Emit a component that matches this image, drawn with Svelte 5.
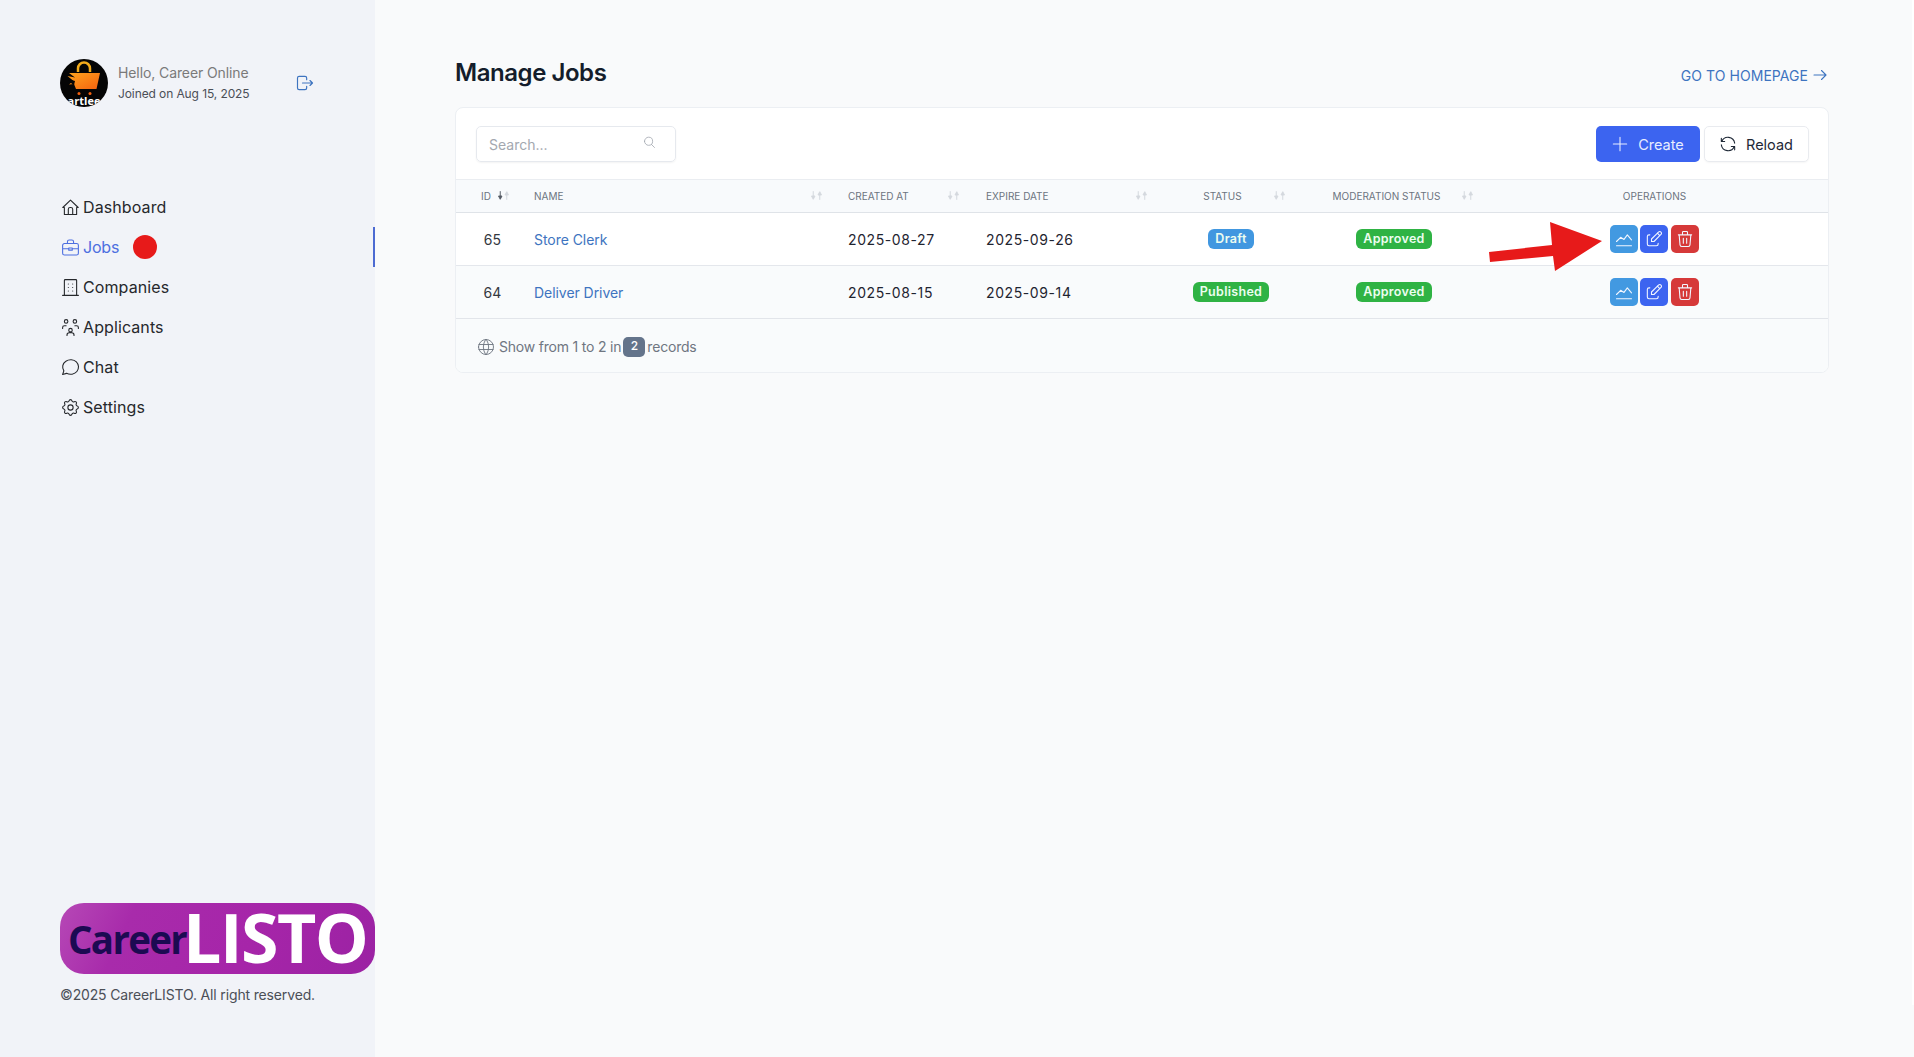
<script>
  const I = {
    home: 'M5 12H3.2L12 3.5l8.8 8.5H19v8H5zM9.5 20v-6a2 2 0 0 1 2-2h1a2 2 0 0 1 2 2v6',
    brief: 'M5 7.5h14a2 2 0 0 1 2 2v9a2 2 0 0 1-2 2H5a2 2 0 0 1-2-2v-9a2 2 0 0 1 2-2zM8.5 7.5V5.5a2 2 0 0 1 2-2h3a2 2 0 0 1 2 2v2M3 13.5h7M14 13.5h7M10 12.5h4v2.5h-4z',
    building: 'M3 21h18M5 21V4a1 1 0 0 1 1-1h12a1 1 0 0 1 1 1v17M9.5 8h.01M14.5 8h.01M9.5 12h.01M14.5 12h.01M9.5 16h.01M14.5 16h.01',
    users: 'M12 13a2 2 0 1 0 0 4 2 2 0 0 0 0-4zM8 21v-.5a2.5 2.5 0 0 1 2.5-2.5h3a2.5 2.5 0 0 1 2.5 2.5v.5M15 5a2 2 0 1 0 4 0 2 2 0 0 0-4 0zM17 10h2a2 2 0 0 1 2 2v1M5 5a2 2 0 1 0 4 0 2 2 0 0 0-4 0zM3 13v-1a2 2 0 0 1 2-2h2',
    chat: 'M3 20l1.4-4.2C1.9 12 2.9 7.3 6.7 4.8c3.700-2.600 9-2.200 12 .7 3 3 3.300 7.800.6 11.100-2.700 3.300-7.800 4.100-11.800 2.100z',
    gear: 'M10.325 4.317c.426-1.756 2.924-1.756 3.35 0a1.724 1.724 0 0 0 2.573 1.066c1.543-.94 3.31.826 2.37 2.37a1.724 1.724 0 0 0 1.065 2.572c1.756.426 1.756 2.924 0 3.35a1.724 1.724 0 0 0-1.066 2.573c.94 1.543-.826 3.31-2.37 2.37a1.724 1.724 0 0 0-2.572 1.065c-.426 1.756-2.924 1.756-3.35 0a1.724 1.724 0 0 0-2.573-1.066c-1.543.94-3.31-.826-2.37-2.370a1.724 1.724 0 0 0-1.065-2.572c-1.756-.426-1.756-2.924 0-3.350a1.724 1.724 0 0 0 1.066-2.573c-.94-1.543.826-3.310 2.370-2.370 1 .608 2.296.07 2.572-1.065zM9 12a3 3 0 1 0 6 0 3 3 0 0 0-6 0z',
    logout: 'M14 8V6a2 2 0 0 0-2-2H5a2 2 0 0 0-2 2v12a2 2 0 0 0 2 2h7a2 2 0 0 0 2-2v-2M9 12h12l-3-3m0 6l3-3',
    arrow: 'M4 12h16M14 6l6 6-6 6',
    search: 'M4 10a6.500 6.500 0 1 0 13 0 6.500 6.500 0 0 0-13 0zM20 20l-5-5',
    plus: 'M12 4v16M4 12h16',
    reload: 'M20 11a8.100 8.100 0 0 0-15.500-2m-.5-4v4h4M4 13a8.100 8.100 0 0 0 15.500 2m.5 4v-4h-4',
    chart: 'M3 20h18M3 15l5-5 4 2.500 4-5.500 5 6',
    edit: 'M7 7h-1a2 2 0 0 0-2 2v9a2 2 0 0 0 2 2h9a2 2 0 0 0 2-2v-1M20.385 6.585a2.100 2.100 0 0 0-2.970-2.970L9 12v3h3zM16 5l3 3',
    trash: 'M4 7h16M10 11v6M14 11v6M5 7l1 12a2 2 0 0 0 2 2h8a2 2 0 0 0 2-2l1-12M9 7V4a1 1 0 0 1 1-1h4a1 1 0 0 1 1 1v3',
    globe: 'M3 12a9 9 0 1 0 18 0 9 9 0 0 0-18 0zM3.600 9h16.800M3.600 15h16.800M11.500 3a17 17 0 0 0 0 18M12.500 3a17 17 0 0 1 0 18'
  };
  const nav = [
    ['Dashboard', 'home'], ['Jobs', 'brief', true], ['Companies', 'building'],
    ['Applicants', 'users'], ['Chat', 'chat'], ['Settings', 'gear']
  ];
  const heads = [
    ['ID', 'h-id', true], ['NAME', 'h-name'], ['CREATED AT', 'h-created'],
    ['EXPIRE DATE', 'h-expire'], ['STATUS', 'h-status'], ['MODERATION STATUS', 'h-mod']
  ];
  const rows = [
    { id: 65, name: 'Store Clerk', created: '2025-08-27', expire: '2025-09-26', status: 'Draft', tone: 'blue' },
    { id: 64, name: 'Deliver Driver', created: '2025-08-15', expire: '2025-09-14', status: 'Published', tone: 'green' }
  ];
</script>

{#snippet icon(name, cls)}
  <svg class={cls} viewBox="0 0 24 24" fill="none" stroke="currentColor" stroke-linecap="round" stroke-linejoin="round"><path d={I[name]} /></svg>
{/snippet}

{#snippet sort(active)}
  <svg class="sort" viewBox="0 0 12 10"><path class:dark={active} d="M3 1v6M1.400 5.500 3 8.500l1.600-3z" /><path d="M9 9V3M7.400 4.500 9 1.500l1.600 3z" /></svg>
{/snippet}

<div class="page">
  <aside class="side">
    <div class="top">
      <div class="user">
        <svg class="avatar" viewBox="0 0 48 48">
          <defs>
            <clipPath id="av"><circle cx="24" cy="24" r="24" /></clipPath>
            <linearGradient id="bag" x1="0" x2="1" y1="0" y2="1"><stop offset="0" stop-color="#ffa51e" /><stop offset="1" stop-color="#f4620f" /></linearGradient>
          </defs>
          <g clip-path="url(#av)">
            <rect width="48" height="48" fill="#050505" />
            <path d="M18 13v-3.500a6 6 0 0 1 12 0V13" fill="none" stroke="#f2ab1b" stroke-width="2.500" />
            <path d="M9 14h31l-3.500 16H16l-2-5 -5 .5 4.500-3.500-6-5 7.500 1.500z" fill="url(#bag)" />
            <path d="M8 20l7 2-1 4-2-1z" fill="#050505" />
            <circle cx="19" cy="34.500" r="1.500" fill="#f4620f" /><circle cx="30" cy="34.500" r="1.500" fill="#f4620f" />
            <text x="24" y="46" text-anchor="middle" fill="#fff" font-size="11" font-weight="700" font-family="Open Sans, sans-serif">artlee</text>
          </g>
        </svg>
        <div class="who">
          <div class="hello">Hello, Career Online</div>
          <div class="joined">Joined on Aug 15, 2025</div>
        </div>
        {@render icon('logout', 'out')}
      </div>
      <nav class="nav">
        {#each nav as [label, ic, active]}
          <div class="item" class:active>
            {@render icon(ic, 'nav-ic')}
            <span>{label}</span>
            {#if active}<i class="dot"></i>{/if}
          </div>
        {/each}
      </nav>
    </div>
    <div class="foot">
      <div class="logo"><span class="career">Career</span><span class="listo">LISTO</span></div>
      <div class="copy">©2025 CareerLISTO. All right reserved.</div>
    </div>
  </aside>

  <main class="main">
    <header class="title-row">
      <h1>Manage Jobs</h1>
      <div class="home-link">GO TO HOMEPAGE {@render icon('arrow', 'arrow')}</div>
    </header>

    <section class="card">
      <div class="tools">
        <div class="search"><span>Search...</span>{@render icon('search', 'search-ic')}</div>
        <div class="btns">
          <div class="btn primary">{@render icon('plus', 'btn-ic')}Create</div>
          <div class="btn plain">{@render icon('reload', 'btn-ic')}Reload</div>
        </div>
      </div>

      <div class="grid thead">
        {#each heads as [t, cls, active]}
          <div class={'th ' + cls}><span>{t}</span>{@render sort(active)}</div>
        {/each}
        <div class="th h-ops"><span>OPERATIONS</span></div>
      </div>

      {#each rows as r, n}
        <div class="grid row" class:alt={n === 1}>
          <div class="td c-id">{r.id}</div>
          <div class="td c-name">{r.name}</div>
          <div class="td c-date">{r.created}</div>
          <div class="td c-date">{r.expire}</div>
          <div class="td c-status"><span class={'badge ' + r.tone}>{r.status}</span></div>
          <div class="td c-mod"><span class="badge green">Approved</span></div>
          <div class="td c-ops">
            <b class="op sky">{@render icon('chart', 'op-ic')}</b>
            <b class="op blue2">{@render icon('edit', 'op-ic')}</b>
            <b class="op red">{@render icon('trash', 'op-ic')}</b>
          </div>
        </div>
      {/each}

      <div class="tfoot">
        {@render icon('globe', 'globe')}
        <span>Show from 1 to 2 in</span><em>2</em><span>records</span>
      </div>
    </section>

    <svg class="pointer" viewBox="0 0 120 52">
      <polygon points="1,32 64,25 62,2 114,21 67,51 65,36 2,42" fill="#e71a1a" />
    </svg>
  </main>
  <div class="edge"></div>
</div>

<style>
  :global(body) { margin: 0; background: #f9fafb; }
  .page { display: flex; height: 1057px; overflow: hidden; font-family: Inter, "Open Sans", sans-serif; color: #1f2937; position: relative; }
  .side { width: 375px; flex: none; box-sizing: border-box; background: #f1f3f8; padding: 59px 0 52px 60px; display: flex; flex-direction: column; justify-content: space-between; }
  .user { display: flex; align-items: center; height: 48px; }
  .avatar { width: 48px; height: 48px; flex: none; }
  .who { margin-left: 10px; width: 177px; }
  .hello { font-size: 14px; line-height: 22px; color: #7a7a7a; letter-spacing: -.1px; }
  .joined { font-size: 12px; line-height: 20px; color: #4b4f57; letter-spacing: -.1px; }
  .out { width: 20px; height: 20px; color: #3e74c0; stroke-width: 1.4; }
  .nav { margin-top: 80px; }
  .item { height: 40px; display: flex; align-items: center; font-size: 16px; color: #26282c; position: relative; }
  .item span { margin-left: 2px; letter-spacing: .1px; }
  .nav-ic { width: 21px; height: 21px; stroke-width: 1.25; flex: none; }
  .item.active { color: #4d6fe0; }
  .item.active span { letter-spacing: -.2px; }
  .item.active::after { content: ""; position: absolute; right: 0; top: 0; bottom: 0; width: 2px; background: #4d6bd2; }
  .dot { width: 24px; height: 24px; border-radius: 50%; background: #e71a1a; margin-left: 14px; }
  .logo { width: 315px; height: 71px; border-radius: 24px; background: linear-gradient(115deg, #b648b6 0, #a82bab 22%, #a625a9 60%, #9b22a3 100%); display: flex; align-items: center; box-sizing: border-box; padding-left: 8px; font-family: "Open Sans", sans-serif; font-weight: 700; }
  .career { font-size: 38.500px; color: #1c0a52; letter-spacing: -1.700px; line-height: 60px; padding-top: 1px; }
  .listo { font-size: 68px; color: #fff; line-height: 60px; letter-spacing: -1.500px; margin-left: -3px; margin-bottom: 4px; }
  .copy { margin-top: 11px; font-size: 14px; line-height: 20px; color: #4b4f57; letter-spacing: -.15px; }

  .main { flex: 1; padding: 54px 85px 0 80px; position: relative; }
  .title-row { height: 36px; display: flex; align-items: center; justify-content: space-between; margin-bottom: 17px; }
  h1 { margin: 0; font-size: 24px; font-weight: 600; color: #141d2b; letter-spacing: -.45px; }
  .home-link { display: flex; align-items: center; gap: 3px; font-size: 14px; color: #3e74c0; padding-top: 6px; letter-spacing: .05px; }
  .arrow { width: 18px; height: 18px; stroke-width: 1.5; }
  .card { background: #fff; border: 1px solid #eceff3; border-radius: 8px; overflow: hidden; }
  .tools { height: 71px; box-sizing: border-box; padding: 18px 19px 0 20px; display: flex; justify-content: space-between; }
  .search { width: 200px; height: 36px; box-sizing: border-box; border: 1px solid #e6e9ee; border-radius: 5px; box-shadow: 0 1px 2px rgba(0,0,0,.05); padding: 0 12px; display: flex; align-items: center; justify-content: space-between; font-size: 14px; color: #a3a8b0; }
  .search-ic { width: 15px; height: 15px; stroke-width: 1.3; margin-top: -3px; margin-right: 6px; }
  .btns { display: flex; gap: 4px; }
  .btn { width: 105px; height: 36px; box-sizing: border-box; border-radius: 5px; display: flex; align-items: center; justify-content: center; gap: 8px; padding-right: 2px; font-size: 14.500px; }
  .primary { background: #3c64f0; color: #e8edff; width: 104px; }
  .plain { background: #fff; border: 1px solid #e9ebef; color: #1f2937; box-shadow: 0 1px 2px rgba(0,0,0,.04); }
  .btn-ic { width: 20px; height: 20px; stroke-width: 1.3; }

  .grid { display: grid; grid-template-columns: 78px 314px 138px 173px 144px 182px 1fr; }
  .thead { height: 34px; background: #f8fafc; border-top: 1px solid #eaedf1; border-bottom: 1px solid #dfe3e8; font-size: 10px; color: #6c7480; align-items: center; box-sizing: border-box; }
  .th { display: flex; align-items: center; justify-content: space-between; box-sizing: border-box; padding-bottom: 1px; }
  .sort { width: 13px; height: 11px; flex: none; fill: #d4d8de; stroke: #d4d8de; stroke-width: .9; }
  .sort .dark { fill: #555b66; stroke: #555b66; }
  .h-id { padding-left: 25px; justify-content: flex-start; gap: 6px; }
  .h-name { padding-right: 25px; }
  .h-created { padding-right: 26px; }
  .h-expire { padding-right: 11px; }
  .h-status { padding: 0 17px 1px 13px; }
  .h-status span, .h-mod span { flex: 1; text-align: center; }
  .h-mod { padding: 0 11px 1px 9px; }
  .h-ops { justify-content: center; padding-right: 4px; }

  .row { height: 53px; align-items: center; border-bottom: 1px solid #e4e7ec; box-sizing: border-box; font-size: 14px; }
  .row.alt { background: #f9fbfc; border-bottom-color: #e2e5ea; box-shadow: 0 2px 3px rgba(0,0,0,.05); }
  .c-id { text-align: center; padding-left: 20px; padding-right: 25px; color: #34383f; letter-spacing: .2px; }
  .c-name { color: #3e74c0; letter-spacing: -.05px; }
  .c-date { color: #1f2430; letter-spacing: .6px; }
  .c-status, .c-mod { display: flex; justify-content: center; margin-top: -1px; }
  .badge { height: 20px; box-sizing: border-box; padding: 0 7px; border-radius: 6px; font-size: 12.500px; line-height: 20px; font-weight: 600; color: #ecfdf0; letter-spacing: .3px; }
  .badge.blue { background: #4197e0; }
  .badge.green { background: #2fb344; }
  .c-ops { display: flex; justify-content: center; gap: 2px; padding-right: 4px; margin-top: -1px; }
  .op { width: 28px; height: 28px; border-radius: 5px; display: flex; align-items: center; justify-content: center; color: #f2f6ff; }
  .op:last-child { margin-left: 1px; }
  .sky { background: #4299e1; }
  .blue2 { background: #3c64f0; }
  .red { background: #d63939; }
  .op-ic { width: 20px; height: 20px; stroke-width: 1.300; }

  .tfoot { height: 53px; box-sizing: border-box; padding: 2px 0 0 20px; background: #f9fbfc; display: flex; align-items: center; font-size: 14px; color: #6f7681; letter-spacing: -.2px; }
  .globe { width: 20px; height: 20px; stroke-width: 1.1; margin-right: 3px; flex: none; }
  .tfoot em { font-style: normal; background: #64748b; color: #fff; font-size: 12px; font-weight: 500; width: 22px; height: 20px; line-height: 18px; text-align: center; border-radius: 5px; margin: 0 2px; }

  .pointer { position: absolute; left: 1113px; top: 220px; width: 120px; height: 52px; }
  .edge { position: absolute; right: 0; top: 0; width: 2px; height: 1005px; background: #fff; }
</style>
